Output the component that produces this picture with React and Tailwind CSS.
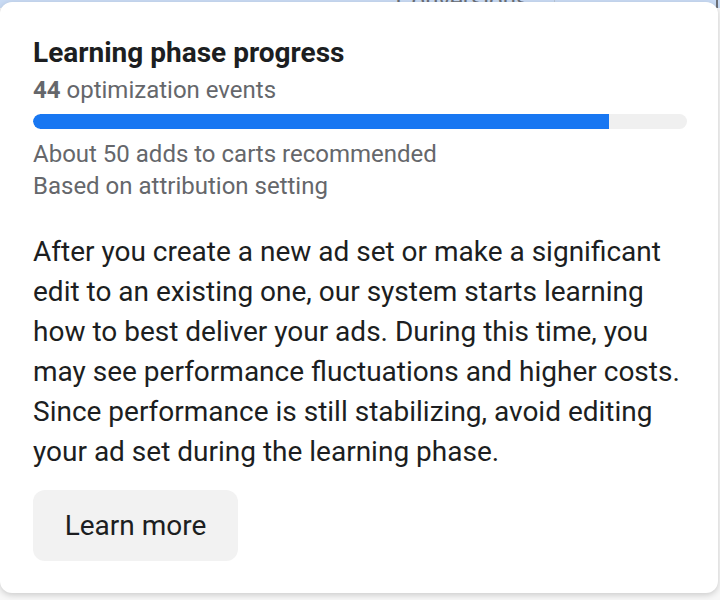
export default function App() {
  const events = 44
  const target = 50
  const pct = Math.min(100, (events / target) * 100)

  return (
    <div
      className="relative w-[720px] h-[600px] overflow-hidden bg-[#f7f7f7]"
      style={{ fontFamily: 'Roboto, "Noto Sans", sans-serif' }}
    >
      {/* table header peeking out behind the popover */}
      <div className="flex h-[8px] bg-[#c9dbf4]">
        <div className="w-[555px] border-r border-[#b9c6d6]" />
        <div className="relative w-[163px] border-r-2 border-[#6b6f76]" />
      </div>
      <span className="absolute left-[396px] top-[-17px] text-[24px] text-[#6b6f76]">Conversions</span>

      <div className="absolute left-0 top-[2px] w-[718px] h-[591px] rounded-[12px] bg-white shadow-[0_2px_6px_rgba(0,0,0,0.18)] pl-[33px] pr-[31px] pt-[35px]">
        <h2 className="text-[28px] leading-[32px] font-bold text-[#1c1e21]">Learning phase progress</h2>
        <p className="mt-[5px] text-[24px] leading-[32px] text-[#65676b]">
          <span className="font-bold">{events}</span> optimization events
        </p>
        <div className="mt-[8px] h-[15px] w-full rounded-full bg-[#f0f0f0] overflow-hidden">
          <div className="h-full rounded-l-full bg-[#1877f2]" style={{ width: `${pct}%` }} />
        </div>
        <div className="mt-[9px] text-[24px] leading-[32px] text-[#65676b]">
          <p>About 50 adds to carts recommended</p>
          <p>Based on attribution setting</p>
        </div>
        <p className="mt-[30px] text-[28px] leading-[40px] text-[#1c1e21]">
          After you create a new ad set or make a significant edit to an existing one, our system starts learning how to best deliver your ads. During this time, you may see performance fluctuations and higher costs. Since performance is still stabilizing, avoid editing your ad set during the learning phase.
        </p>
        <button className="mt-[18px] h-[71px] w-[205px] rounded-[12px] bg-[#f2f2f2] text-[28px] text-[#1c1e21]">
          Learn more
        </button>
      </div>
    </div>
  )
}
